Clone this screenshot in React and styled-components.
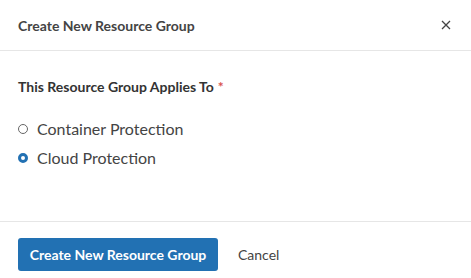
import React, { useState } from "react";
import styled, { createGlobalStyle } from "styled-components";

const GlobalStyle = createGlobalStyle`
  body {
    margin: 0;
    background: #fff;
    font-family: Lato, "Open Sans", sans-serif;
    color: #333;
  }
`;

const Dialog = styled.div`
  width: 471px;
  height: 278px;
  background: #fff;
  display: flex;
  flex-direction: column;
`;

const Header = styled.div`
  height: 51px;
  box-sizing: border-box;
  padding: 0 18px;
  display: flex;
  align-items: center;
  justify-content: space-between;
  border-bottom: 1px solid #e6e6e6;
`;

const Title = styled.h2`
  margin: 0;
  font-size: 14px;
  font-weight: 700;
  color: #444;
`;

const CloseButton = styled.button`
  border: none;
  background: none;
  padding: 0;
  margin-right: 2px;
  display: flex;
  cursor: pointer;
`;

const Body = styled.div`
  flex: 1;
  padding: 27px 18px 0;
  border-bottom: 1px solid #e6e6e6;
`;

const FieldLabel = styled.div`
  font-size: 14px;
  font-weight: 700;
  color: #333;
  margin-bottom: 24px;
`;

const Required = styled.span`
  color: #d9534f;
  margin-left: 4px;
`;

const RadioList = styled.div`
  display: flex;
  flex-direction: column;
  gap: 10px;
`;

const RadioRow = styled.label`
  display: flex;
  align-items: center;
  gap: 9px;
  font-size: 16px;
  color: #444;
  height: 19px;
  cursor: pointer;
`;

const RadioDot = styled.span`
  width: 10px;
  height: 10px;
  box-sizing: border-box;
  border-radius: 50%;
  border: ${(p) => (p.$checked ? "3px solid #2271b3" : "1.5px solid #666")};
  background: #fff;
`;

const Footer = styled.div`
  height: 56px;
  box-sizing: border-box;
  padding: 9px 18px 0;
  display: flex;
  align-items: center;
  gap: 20px;
`;

const PrimaryButton = styled.button`
  height: 33px;
  width: 200px;
  border: none;
  border-radius: 3px;
  background: #2271b3;
  color: #fff;
  font-family: inherit;
  font-size: 14px;
  font-weight: 700;
  cursor: pointer;
`;

const TextButton = styled.button`
  border: none;
  background: none;
  padding: 0;
  font-family: inherit;
  font-size: 14px;
  color: #444;
  cursor: pointer;
`;

const options = ["Container Protection", "Cloud Protection"];

export default function App() {
  const [selected, setSelected] = useState("Cloud Protection");

  return (
    <>
      <GlobalStyle />
      <Dialog>
        <Header>
          <Title>Create New Resource Group</Title>
          <CloseButton aria-label="Close">
            <svg width="10" height="10" viewBox="0 0 10 10">
              <path d="M1 1 L9 9 M9 1 L1 9" stroke="#444" strokeWidth="1.3" />
            </svg>
          </CloseButton>
        </Header>
        <Body>
          <FieldLabel>
            This Resource Group Applies To<Required>*</Required>
          </FieldLabel>
          <RadioList>
            {options.map((o) => (
              <RadioRow key={o} onClick={() => setSelected(o)}>
                <RadioDot $checked={selected === o} />
                {o}
              </RadioRow>
            ))}
          </RadioList>
        </Body>
        <Footer>
          <PrimaryButton>Create New Resource Group</PrimaryButton>
          <TextButton>Cancel</TextButton>
        </Footer>
      </Dialog>
    </>
  );
}
